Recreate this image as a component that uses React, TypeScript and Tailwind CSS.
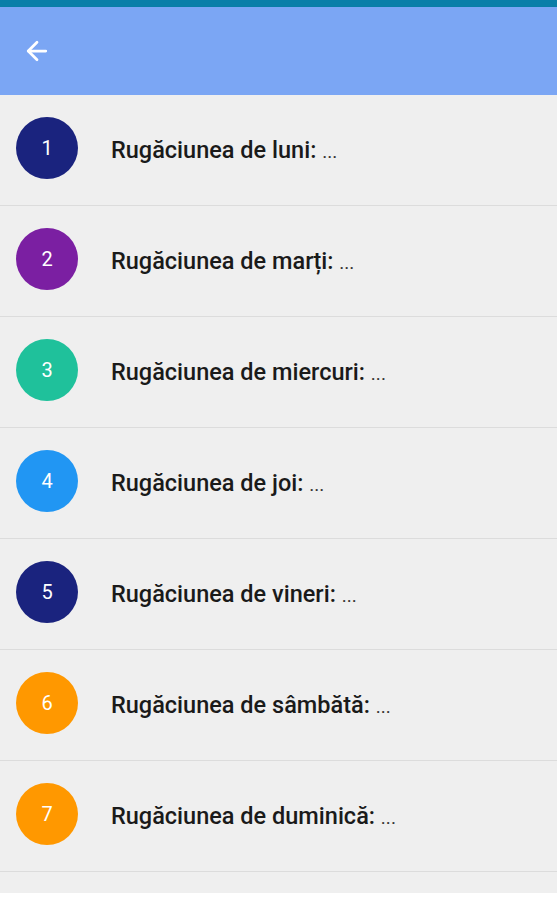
import { ArrowLeft } from 'lucide-react';

const days = [
  { n: 1, name: 'luni', color: 'bg-[#1a237e]' },
  { n: 2, name: 'marți', color: 'bg-[#7b1fa2]' },
  { n: 3, name: 'miercuri', color: 'bg-[#1fc19b]' },
  { n: 4, name: 'joi', color: 'bg-[#2196f3]' },
  { n: 5, name: 'vineri', color: 'bg-[#1a237e]' },
  { n: 6, name: 'sâmbătă', color: 'bg-[#ff9800]' },
  { n: 7, name: 'duminică', color: 'bg-[#ff9800]' },
];

export default function App() {
  return (
    <div className="flex h-[900px] w-[557px] flex-col bg-white font-['Roboto',sans-serif]">
      {/* status bar strip */}
      <div className="h-[7px] bg-[#0a7fa8]" />

      {/* Toolbar */}
      <div className="flex h-[88px] items-center bg-[#7ba6f4] px-[22px] shadow-[0_1px_2px_rgba(0,0,0,0.15)]">
        <ArrowLeft className="h-[30px] w-[30px] text-white" strokeWidth={2.2} />
      </div>

      {/* Prayer list */}
      <div className="flex flex-col bg-[#efefef] pb-[21px]">
        {days.map(day => (
          <div key={day.n} className="flex h-[111px] items-center border-b border-[#dcdcdc] pb-[4px] pl-[16px]">
            <div className={`flex h-[62px] w-[62px] items-center justify-center rounded-full ${day.color}`}>
              <span className="text-[20px] text-white">{day.n}</span>
            </div>
            <p className="ml-[33px] mt-[6px] text-[23.5px] font-medium text-[#1a1a1a]">
              Rugăciunea de {day.name}: <span className="text-[19px] font-normal text-[#333]">...</span>
            </p>
          </div>
        ))}
      </div>

      <div className="flex-1 bg-white" />
    </div>
  );
}
